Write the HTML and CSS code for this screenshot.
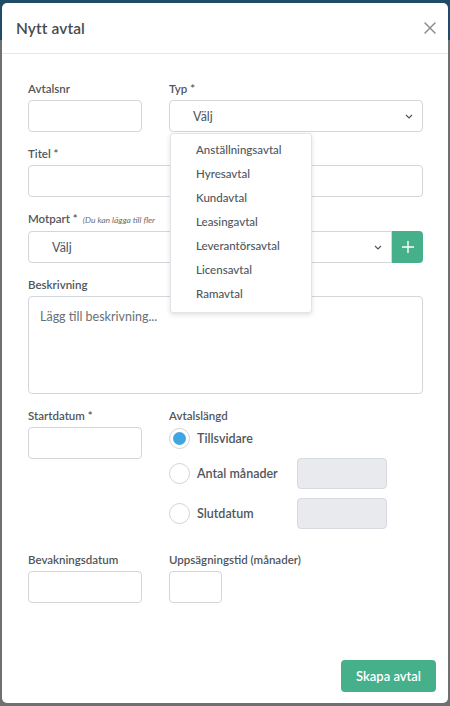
FILE: index.html
```html
<!DOCTYPE html>
<html lang="sv">
<head>
<meta charset="utf-8">
<title>Nytt avtal</title>
<link rel="stylesheet" href="styles.css">
</head>
<body>
<div class="modal">
  <div class="modal-header">
    <h1 class="modal-title">Nytt avtal</h1>
    <button class="close-btn" aria-label="Stäng">
      <svg width="12" height="12" viewBox="0 0 12 12"><path d="M1 1L11 11M11 1L1 11" stroke="#8a8d91" stroke-width="1.5" stroke-linecap="round"/></svg>
    </button>
  </div>
  <div class="modal-body">
    <div class="row grid-2">
      <div class="field">
        <label class="label">Avtalsnr</label>
        <div class="input"></div>
      </div>
      <div class="field field-typ">
        <label class="label">Typ *</label>
        <div class="input select">
          <span class="select-value">Välj</span>
          <svg class="chevron" width="8" height="5" viewBox="0 0 8 5"><path d="M1 1l3 3 3-3" fill="none" stroke="#555" stroke-width="1.2"/></svg>
        </div>
        <ul class="dropdown">
          <li>Anställningsavtal</li>
          <li>Hyresavtal</li>
          <li>Kundavtal</li>
          <li>Leasingavtal</li>
          <li>Leverantörsavtal</li>
          <li>Licensavtal</li>
          <li>Ramavtal</li>
        </ul>
      </div>
    </div>
    <div class="row">
      <div class="field">
        <label class="label">Titel *</label>
        <div class="input"></div>
      </div>
    </div>
    <div class="row">
      <div class="field">
        <label class="label label-flex">Motpart * <span class="hint">(Du kan lägga till fler</span></label>
        <div class="input-group">
          <div class="input select select-group">
            <span class="select-value">Välj</span>
            <svg class="chevron" width="8" height="5" viewBox="0 0 8 5"><path d="M1 1l3 3 3-3" fill="none" stroke="#555" stroke-width="1.2"/></svg>
          </div>
          <button class="add-btn" aria-label="Lägg till">
            <svg width="12" height="12" viewBox="0 0 12 12"><path d="M6 0V12M0 6H12" stroke="#fff" stroke-width="1.4"/></svg>
          </button>
        </div>
      </div>
    </div>
    <div class="row">
      <div class="field">
        <label class="label">Beskrivning</label>
        <div class="input textarea"><span class="placeholder">Lägg till beskrivning...</span></div>
      </div>
    </div>
    <div class="row grid-2 row-dates">
      <div class="field">
        <label class="label">Startdatum *</label>
        <div class="input"></div>
      </div>
      <div class="field">
        <label class="label">Avtalslängd</label>
        <div class="radio-list">
          <div class="radio-row radio-row-first">
            <span class="radio checked"></span>
            <span class="radio-label">Tillsvidare</span>
          </div>
          <div class="radio-row">
            <span class="radio"></span>
            <span class="radio-label">Antal månader</span>
            <div class="input disabled"></div>
          </div>
          <div class="radio-row">
            <span class="radio"></span>
            <span class="radio-label">Slutdatum</span>
            <div class="input disabled"></div>
          </div>
        </div>
      </div>
    </div>
    <div class="row grid-2">
      <div class="field">
        <label class="label">Bevakningsdatum</label>
        <div class="input"></div>
      </div>
      <div class="field">
        <label class="label">Uppsägningstid (månader)</label>
        <div class="input small"></div>
      </div>
    </div>
  </div>
  <div class="modal-footer">
    <button class="primary-btn">Skapa avtal</button>
  </div>
</div>
</body>
</html>
```

FILE: styles.css
```css
* { box-sizing: border-box; }

html, body {
  margin: 0;
  width: 450px;
  height: 706px;
  overflow: hidden;
}

body {
  padding: 3px 2px 0 2px;
  background: linear-gradient(to bottom, #1d4b68 0, #1d4b68 40px, #6f7070 40px, #6f7070 100%);
  font-family: "Lato", "Open Sans", sans-serif;
  color: #50565c;
}

.modal {
  width: 446px;
  height: 700px;
  background: #fff;
  border-radius: 5px;
  display: flex;
  flex-direction: column;
}

.modal-header {
  height: 51px;
  border-bottom: 1px solid #e5e7ea;
  display: flex;
  align-items: center;
  justify-content: space-between;
  padding: 0 12px 0 14px;
  flex-shrink: 0;
}

.modal-title {
  margin: 0;
  font-size: 15.5px;
  font-weight: 600;
  color: #454b51;
  letter-spacing: 0.1px;
}

.close-btn {
  border: 0;
  background: none;
  padding: 0;
  width: 12px;
  height: 12px;
  display: flex;
}

.modal-body {
  padding: 28px 25px 0 26px;
}

.row { margin-bottom: 15px; }
.row:nth-child(3), .row:nth-child(4) { margin-top: 1px; }
.row-dates { margin-top: 2px; margin-bottom: 24px; }

.grid-2 {
  display: grid;
  grid-template-columns: 114px 1fr;
  column-gap: 27px;
}

.field { position: relative; }

.label {
  display: block;
  font-size: 11.5px;
  line-height: 14px;
  font-weight: 600;
  color: #50565c;
  margin-bottom: 4px;
  white-space: nowrap;
}

.label-flex {
  display: flex;
  align-items: baseline;
}

.hint {
  white-space: nowrap;
  font-size: 8.5px;
  font-style: italic;
  font-weight: 400;
  color: #6a6f74;
  margin-left: 5px;
}

.input {
  height: 32px;
  border: 1px solid #d3d6da;
  border-radius: 4px;
  background: #fff;
}

.select {
  display: flex;
  align-items: center;
  justify-content: space-between;
  padding: 0 9px 0 23px;
}

.select-value {
  font-size: 12.5px;
  color: #4f555a;
}

.chevron { display: block; }

.input-group { display: flex; }

.select-group {
  flex: 1;
  border-radius: 4px 0 0 4px;
}

.add-btn {
  width: 31px;
  height: 32px;
  border: 0;
  padding: 0;
  background: #46b08b;
  border-radius: 0 4px 4px 0;
  display: flex;
  align-items: center;
  justify-content: center;
}

.textarea {
  height: 98px;
  padding: 8px 11px;
}

.placeholder {
  font-size: 12.5px;
  color: #6a6f74;
}

.radio-list {
  display: flex;
  flex-direction: column;
  gap: 9px;
}

.radio-row {
  display: flex;
  align-items: center;
  height: 31px;
}

.radio-row-first { height: 22px; }

.radio {
  width: 21px;
  height: 21px;
  border-radius: 50%;
  border: 1px solid #d0d3d7;
  background: #fff;
  flex-shrink: 0;
  display: flex;
  align-items: center;
  justify-content: center;
}

.radio.checked::after {
  content: "";
  width: 13px;
  height: 13px;
  border-radius: 50%;
  background: #3ea6e2;
}

.radio-label {
  width: 100px;
  margin-left: 7px;
  font-size: 12.5px;
  font-weight: 600;
  color: #50565c;
}

.input.disabled {
  width: 90px;
  height: 31px;
  background: #e8eaed;
  border-color: #d6d9dd;
}

.input.small { width: 53px; }

.dropdown {
  position: absolute;
  top: calc(100% + 1px);
  left: 1px;
  width: 142px;
  margin: 0;
  padding: 4px 0 6px;
  list-style: none;
  background: #fff;
  border: 1px solid #e2e4e7;
  border-radius: 3px;
  box-shadow: 0 2px 5px rgba(0, 0, 0, 0.12);
  z-index: 5;
}

.dropdown li {
  height: 24px;
  line-height: 24px;
  padding-left: 25px;
  font-size: 11.5px;
  font-weight: 500;
  color: #50565c;
}

.modal-footer {
  margin-top: auto;
  display: flex;
  justify-content: flex-end;
  padding: 0 12px 11px;
}

.primary-btn {
  width: 95px;
  height: 32px;
  border: 0;
  border-radius: 4px;
  background: #46b08b;
  color: #fff;
  font-family: "Lato", "Open Sans", sans-serif;
  font-size: 13px;
  font-weight: 600;
}
```
